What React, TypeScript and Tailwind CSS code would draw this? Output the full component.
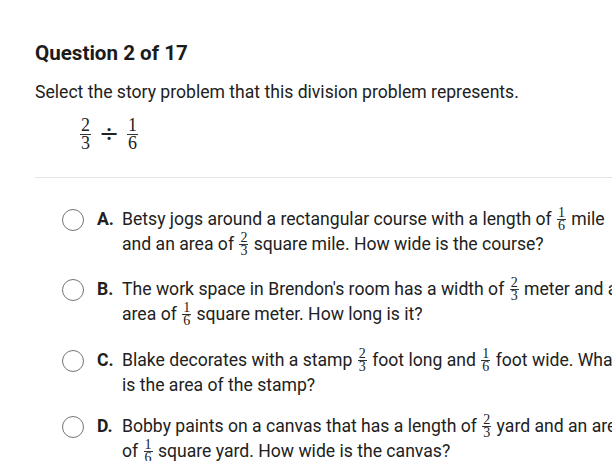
import React from "react";

function Frac({ n, d, big }: { n: string; d: string; big?: boolean }) {
  if (big) {
    return (
      <span className="inline-flex flex-col items-center align-middle font-['Liberation_Serif',serif] text-[18px] leading-[15px]">
        <span className="px-[1px]">{n}</span>
        <span className="my-[1px] h-px w-full bg-[#333]"></span>
        <span>{d}</span>
      </span>
    );
  }
  return (
    <span className="mx-[1px] inline-flex flex-col items-center align-middle font-['Liberation_Serif',serif] text-[14px] leading-[12px] relative top-[-1px]">
      <span className="px-[1px]">{n}</span>
      <span className="h-px w-full bg-[#333]"></span>
      <span>{d}</span>
    </span>
  );
}

function Option({ letter, className, children }: { letter: string; className?: string; children: React.ReactNode }) {
  return (
    <div className={"flex items-start " + (className ?? "")}>
      <div className="mt-[1px] h-[22px] w-[22px] shrink-0 rounded-full border-[1.5px] border-[#757575] bg-white"></div>
      <div className="ml-[13px] w-[25px] shrink-0 font-bold leading-[23px]">{letter}</div>
      <div className="w-[512px] leading-[23px]">{children}</div>
    </div>
  );
}

export default function App() {
  return (
    <div className="h-[461px] w-[612px] overflow-hidden bg-white font-['Roboto',sans-serif] text-[17.6px] text-[#212121]">
      <div className="w-[720px] pl-[35px] pt-[40px]">
        <h1 className="text-[20.6px] font-bold leading-[26px] text-[#1b1b1b]">Question 2 of 17</h1>
        <p className="mt-[14px] leading-[24px]">Select the story problem that this division problem represents.</p>
        <div className="ml-[45px] mt-[12px] flex items-center h-[36px] text-[#222]">
          <Frac n="2" d="3" big />
          <span className="mx-[8px] font-['DejaVu_Serif',serif] text-[24px] leading-none">÷</span>
          <Frac n="1" d="6" big />
        </div>
        <div className="mt-[25px] h-px bg-[#e3e3e3]"></div>
        <div className="ml-[27px] mt-[30px] flex flex-col">
          <Option letter="A.">
            Betsy jogs around a rectangular course with a length of <Frac n="1" d="6" /> mile and an area of <Frac n="2" d="3" /> square mile. How wide is the course?
          </Option>
          <Option letter="B." className="mt-[20px]">
            The work space in Brendon's room has a width of <Frac n="2" d="3" /> meter and an area of <Frac n="1" d="6" /> square meter. How long is it?
          </Option>
          <Option letter="C." className="mt-[21px]">
            Blake decorates with a stamp <Frac n="2" d="3" /> foot long and <Frac n="1" d="6" /> foot wide. What is the area of the stamp?
          </Option>
          <Option letter="D." className="mt-[18px]">
            Bobby paints on a canvas that has a length of <Frac n="2" d="3" /> yard and an area of <Frac n="1" d="6" /> square yard. How wide is the canvas?
          </Option>
        </div>
      </div>
    </div>
  );
}
